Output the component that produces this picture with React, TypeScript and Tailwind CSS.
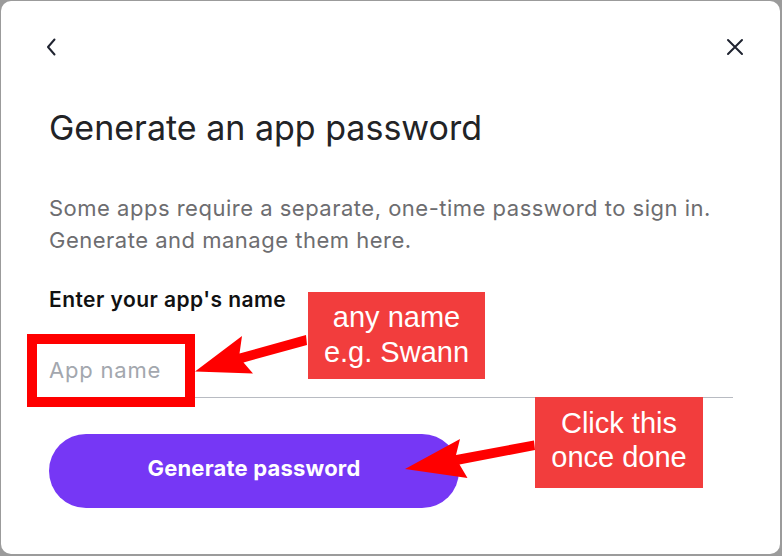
import React from 'react';

const ui = { fontFamily: 'Inter, "Noto Sans", sans-serif' };
const callout = { fontFamily: '"Liberation Sans", Arial, sans-serif' };

export default function App() {
  return (
    <div className="relative flex h-[556px] w-[782px] bg-[#9b9b9b] pl-px pt-px pr-[2px] pb-[2px]" style={ui}>
      <div className="flex flex-1 flex-col rounded-[10px] bg-white pl-[48px] pr-[47px] pt-[37px]">
        {/* header */}
        <div className="-ml-[4px] -mr-[12px] flex h-[18px] items-center justify-between">
          <svg width="12" height="18" viewBox="0 0 12 18" fill="none" stroke="#1f2330" strokeWidth="2" strokeLinecap="round" strokeLinejoin="round">
            <path d="M9.5 1.5 L3 9 L9.5 16.5" />
          </svg>
          <svg width="20" height="20" viewBox="0 0 20 20" fill="none" stroke="#1f2330" strokeWidth="2" strokeLinecap="round">
            <path d="M3 3 L17 17 M17 3 L3 17" />
          </svg>
        </div>

        <h1 className="mt-[52px] text-[34px] leading-[40px] font-normal text-[#222326]">
          Generate an app password
        </h1>

        <p className="mt-[44px] text-[22px] leading-[32px] tracking-[0.5px] text-[#6d6d70]">
          Some apps require a separate, one-time password to sign in.
          <br />
          Generate and manage them here.
        </p>

        <label className="mt-[30px] block text-[21px] leading-[28px] font-semibold tracking-[0.45px] text-[#111111]">
          Enter your app's name
        </label>

        <input
          className="mt-[42px] h-[42px] w-full border-b border-[#b8bbc2] pb-[13px] text-[22px] leading-[28px] tracking-[0.8px] text-[#222] outline-none placeholder:text-[#a3a7ae]"
          placeholder="App name"
        />

        <button className="mt-[36px] flex h-[74px] w-[410px] items-center justify-center rounded-full bg-[#7637f5] pb-[5px] text-[22px] font-bold tracking-[0.2px] text-white">
          Generate password
        </button>
      </div>

      {/* annotations */}
      <svg className="pointer-events-none absolute left-0 top-0" width="782" height="556" viewBox="0 0 782 556">
        <polygon fill="#ff0000" points="195,371.5 242,336 239.5,353.5 306,335 307,345 243.5,362.5 253,373.5" />
        <polygon fill="#ff0000" points="405,469 460,439 456,455 534,440.5 535,450 459.5,464.5 467.5,478" />
      </svg>
      <div className="absolute left-[27px] top-[334px] h-[73px] w-[168px] border-[10px] border-[#ff0000]" />
      <div className="absolute left-[308px] top-[292px] h-[87px] w-[177px] bg-[#f23d3d] pt-[8px] text-center text-[29px] leading-[35px] text-white" style={callout}>
        any name
        <br />
        e.g. Swann
      </div>
      <div className="absolute left-[535px] top-[397px] h-[91px] w-[168px] bg-[#f23d3d] pt-[9px] text-center text-[29px] leading-[34px] text-white" style={callout}>
        Click this
        <br />
        once done
      </div>
    </div>
  );
}
